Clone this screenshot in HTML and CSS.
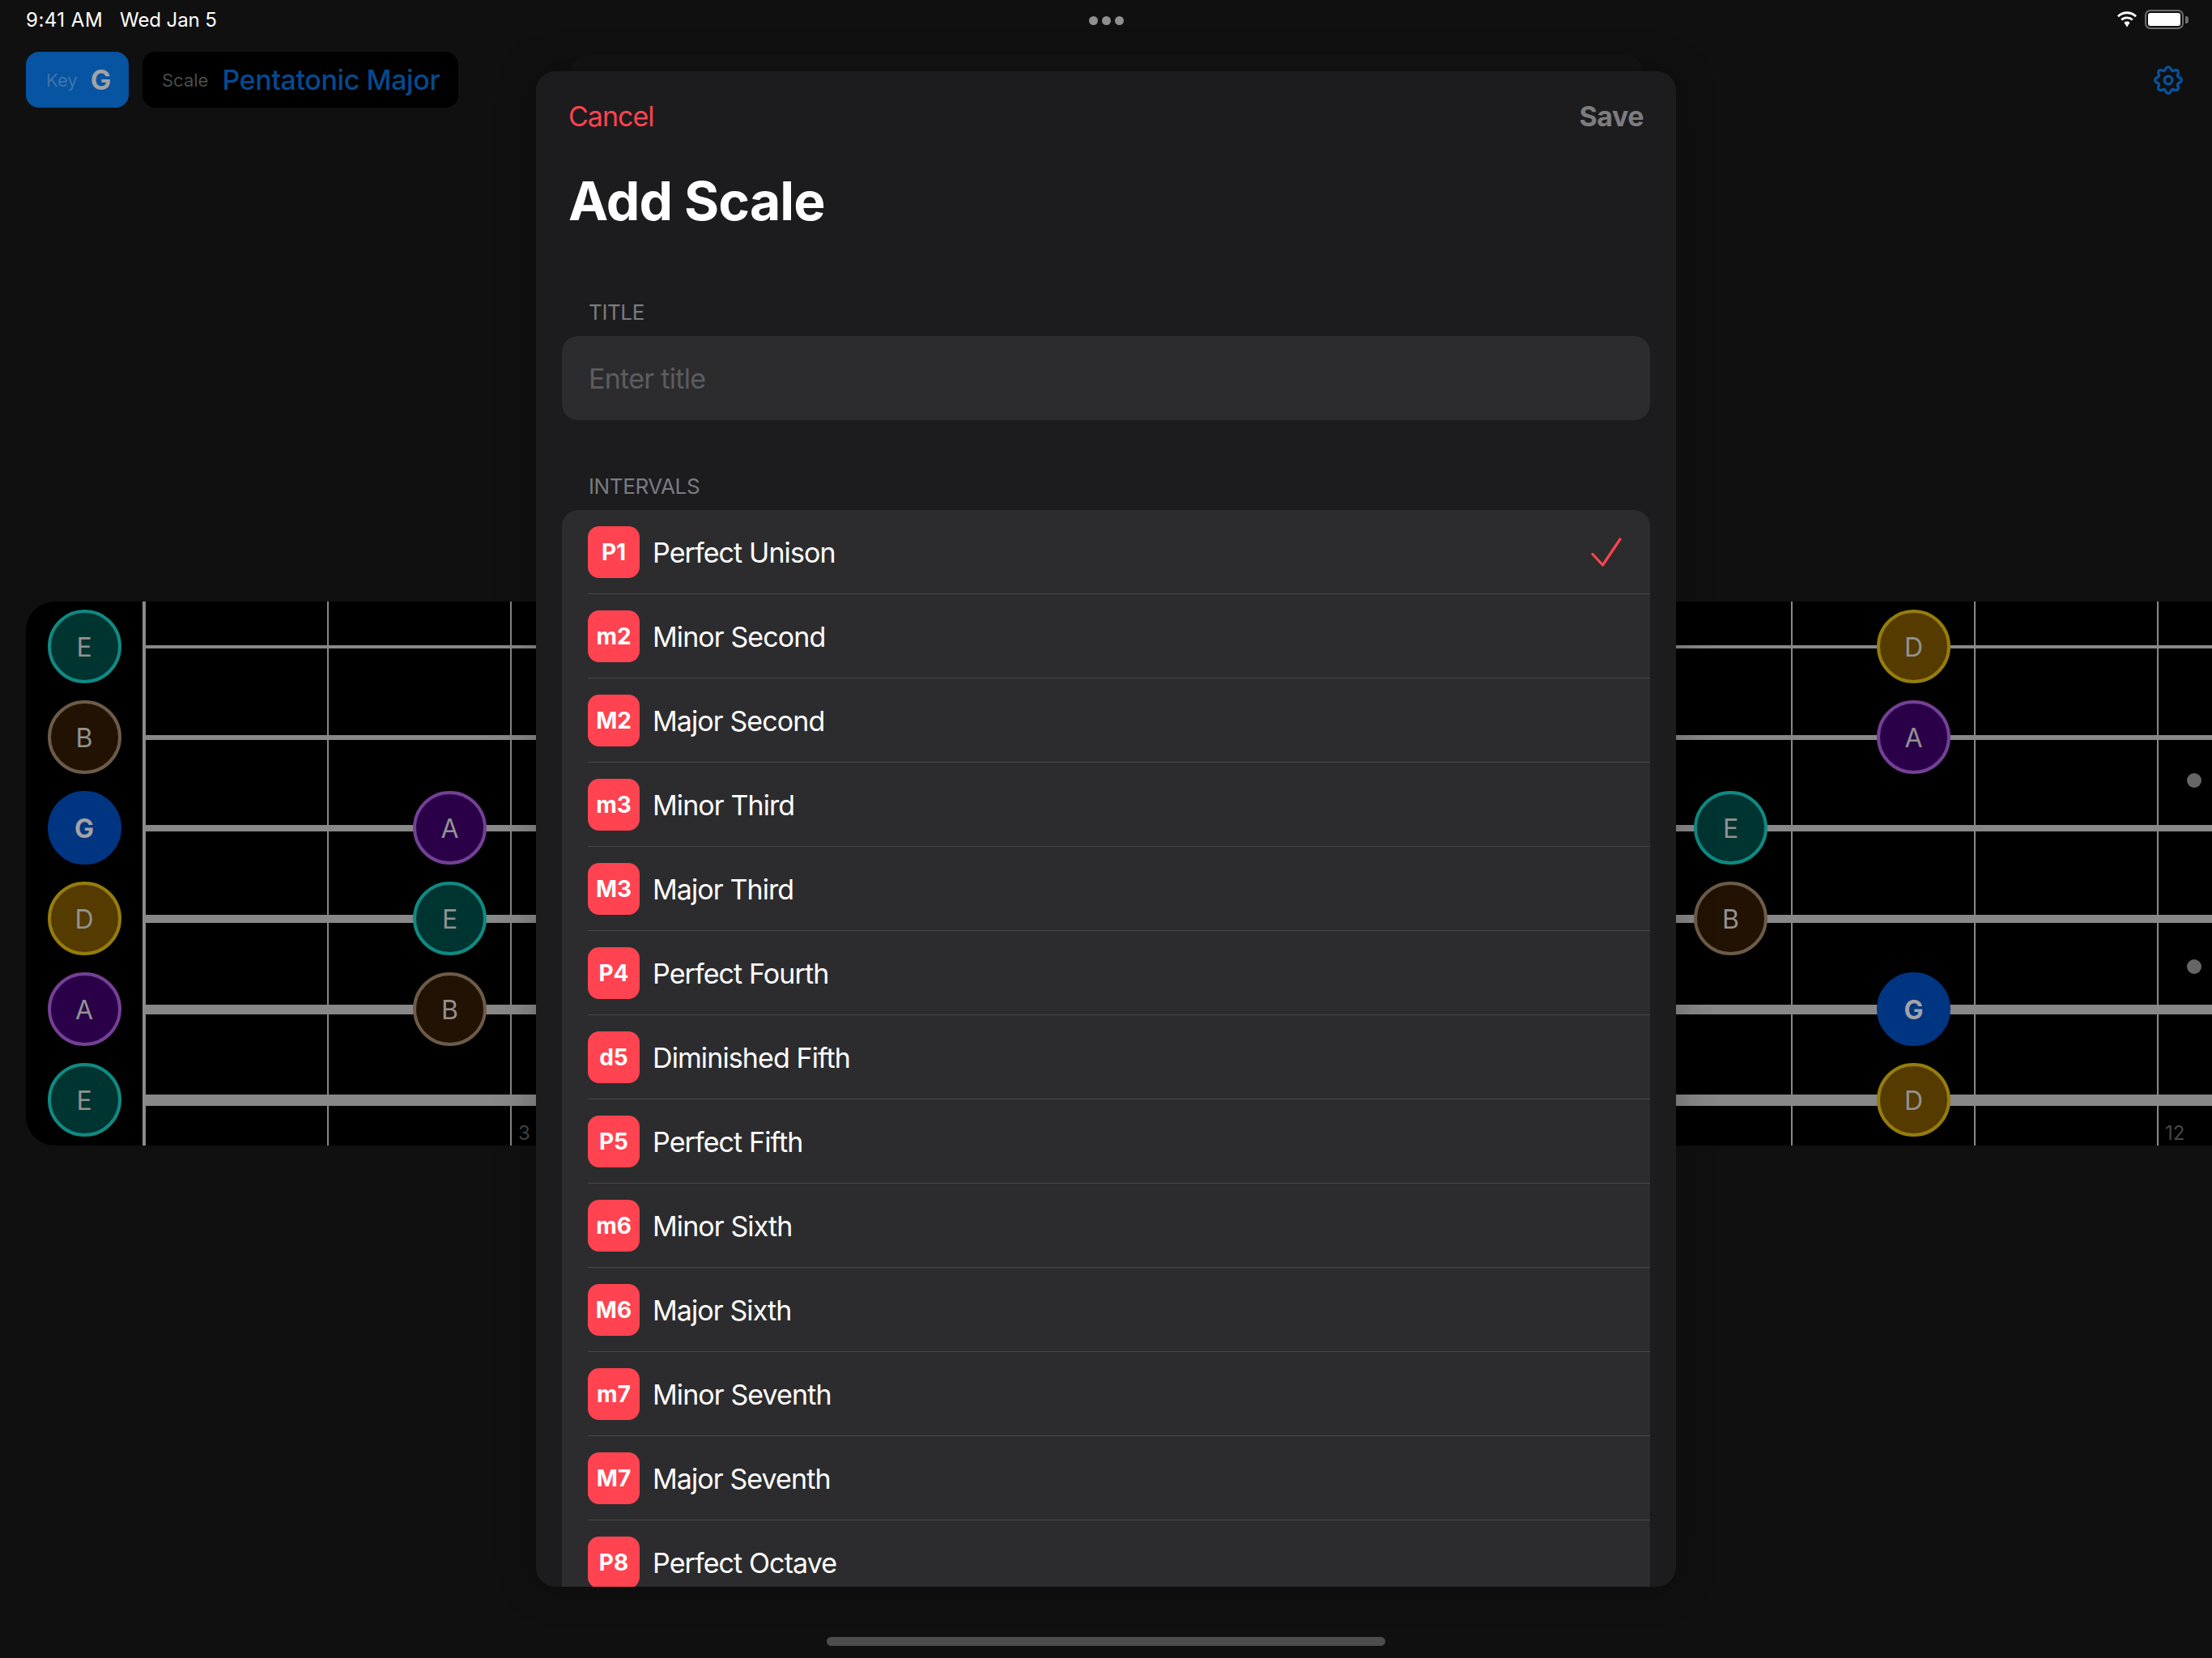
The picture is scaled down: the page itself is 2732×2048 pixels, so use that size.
FILE: index.html
```html
<!DOCTYPE html>
<html lang="en">
<head>
<meta charset="utf-8">
<title>Add Scale</title>
<link rel="stylesheet" href="styles.css">
</head>
<body>
<div class="screen">
  <header class="status">
    <div class="status-left"><span class="time">9:41 AM</span><span class="date">Wed Jan 5</span></div>
    <div class="status-right">
      <svg class="wifi" viewBox="0 0 28 22"><path d="M14 4.200c3.900 0 7.400 1.500 10.100 4l1.900-2A17.400 17.400 0 0 0 14 1.300 17.400 17.400 0 0 0 2 6.200l1.900 2c2.700-2.500 6.200-4 10.100-4z" fill="#fff"/><path d="M14 10.300c2.200 0 4.200.8 5.800 2.200l1.900-2A11.400 11.400 0 0 0 14 7.500c-3 0-5.700 1.100-7.700 3l1.900 2A8.600 8.600 0 0 1 14 10.300z" fill="#fff"/><path d="M14 13.600c-1.400 0-2.600.5-3.500 1.400l3.500 5.600 3.500-5.600c-.9-.9-2.100-1.400-3.500-1.400z" fill="#fff"/></svg>
      <div class="battery"><div class="battery-fill"></div></div>
      <div class="battery-cap"></div>
    </div>
  </header>
  <div class="toolbar">
    <div class="key-btn"><span class="key-label">Key</span><span class="key-value">G</span></div>
    <div class="scale-btn"><span class="scale-label">Scale</span><span class="scale-value">Pentatonic Major</span></div>
    <svg class="gear" viewBox="-19 -19 38 38" fill="none" stroke="#0654a2" stroke-width="3.200" stroke-linejoin="round"><path d="M14.520 -2.890Q18.500 0 14.520 2.890Q9.700 4.020 12.310 8.220Q13.080 13.080 8.220 12.310Q4.020 9.700 2.890 14.520Q0 18.500 -2.890 14.520Q-4.020 9.700 -8.220 12.310Q-13.080 13.080 -12.310 8.220Q-9.700 4.020 -14.520 2.890Q-18.500 0 -14.520 -2.890Q-9.700 -4.020 -12.310 -8.220Q-13.080 -13.080 -8.220 -12.310Q-4.020 -9.700 -2.890 -14.520Q0 -18.500 2.890 -14.520Q4.020 -9.700 8.220 -12.310Q13.080 -13.080 12.310 -8.220Q9.700 -4.020 14.520 -2.890Z"/><circle cx="0" cy="0" r="4.800"/></svg>
  </div>

  <div class="board">
    <div class="open-strings">
      <div class="note teal">E</div>
      <div class="note brown">B</div>
      <div class="note blue">G</div>
      <div class="note yellow">D</div>
      <div class="note purple">A</div>
      <div class="note teal">E</div>
    </div>
    <div class="neck">
      <div class="string s1"></div><div class="string s2"></div><div class="string s3"></div>
      <div class="string s4"></div><div class="string s5"></div><div class="string s6"></div>
      <div class="fret f1"></div><div class="fret f2"></div><div class="fret f3"></div>
      <div class="fret f4"></div><div class="fret f5"></div><div class="fret f6"></div>
      <div class="fret f7"></div><div class="fret f8"></div><div class="fret f9"></div>
      <div class="fret f10"></div><div class="fret f11"></div>

      <div class="note placed purple c-left r3">A</div>
      <div class="note placed teal c-left r4">E</div>
      <div class="note placed brown c-left r5">B</div>
      <div class="note placed yellow c-right r1">D</div>
      <div class="note placed purple c-right r2">A</div>
      <div class="note placed teal c-mid r3">E</div>
      <div class="note placed brown c-mid r4">B</div>
      <div class="note placed blue c-right r5">G</div>
      <div class="note placed yellow c-right r6">D</div>

      <div class="inlay i1"></div><div class="inlay i2"></div>
      <span class="fret-num n3">3</span><span class="fret-num n12">12</span>
    </div>
  </div>

  <div class="home-bar"></div>

  <div class="back-sheet"></div>
  <div class="more"><i></i><i></i><i></i></div>
  <section class="modal">
    <div class="nav"><span class="cancel">Cancel</span><span class="save">Save</span></div>
    <h1 class="title">Add Scale</h1>
    <div class="caption caption-title">TITLE</div>
    <div class="input">Enter title</div>
    <div class="caption caption-intervals">INTERVALS</div>
    <div class="list">
      <div class="row"><span class="badge">P1</span><span class="name">Perfect Unison</span>
        <svg class="check" viewBox="0 0 38 37" fill="none" stroke="#ff4350" stroke-width="3.200" stroke-linecap="round" stroke-linejoin="round"><path d="M2 20.500L14.500 34 36 2"/></svg></div>
      <div class="row"><span class="badge">m2</span><span class="name">Minor Second</span></div>
      <div class="row"><span class="badge">M2</span><span class="name">Major Second</span></div>
      <div class="row"><span class="badge">m3</span><span class="name">Minor Third</span></div>
      <div class="row"><span class="badge">M3</span><span class="name">Major Third</span></div>
      <div class="row"><span class="badge">P4</span><span class="name">Perfect Fourth</span></div>
      <div class="row"><span class="badge">d5</span><span class="name">Diminished Fifth</span></div>
      <div class="row"><span class="badge">P5</span><span class="name">Perfect Fifth</span></div>
      <div class="row"><span class="badge">m6</span><span class="name">Minor Sixth</span></div>
      <div class="row"><span class="badge">M6</span><span class="name">Major Sixth</span></div>
      <div class="row"><span class="badge">m7</span><span class="name">Minor Seventh</span></div>
      <div class="row"><span class="badge">M7</span><span class="name">Major Seventh</span></div>
      <div class="row"><span class="badge">P8</span><span class="name">Perfect Octave</span></div>
    </div>
  </section>
</div>
</body>
</html>
```
FILE: styles.css
```css
* { box-sizing: border-box; margin: 0; padding: 0; }
html, body { width: 2732px; height: 2048px; overflow: hidden; background: #101010; }
body { font-family: Inter, "Liberation Sans", sans-serif; color: #fff; }
.screen { position: relative; width: 2732px; height: 2048px; overflow: hidden; display: flex; flex-direction: column; }

.status { height: 48px; flex: none; display: flex; justify-content: space-between; align-items: center; padding: 0 29px 0 32px; }
.status-left { display: flex; gap: 21px; font-size: 24px; font-weight: 400; }
.time { letter-spacing: 0.500px; }
.date { letter-spacing: -0.100px; }
.status-right { display: flex; align-items: center; }
.wifi { width: 28px; height: 22px; margin-right: 8px; }
.battery { width: 48px; height: 24px; border: 2.500px solid #6e6e6e; border-radius: 7px; padding: 2px; }
.battery-fill { width: 100%; height: 100%; background: #fff; border-radius: 3px; }
.battery-cap { width: 4px; height: 9px; margin-left: 2px; background: #6e6e6e; border-radius: 0 3px 3px 0; }

.toolbar { flex: none; height: 69px; margin-top: 16px; padding: 0 35px 0 32px; display: flex; align-items: center; gap: 17px; }
.key-btn { width: 127px; height: 69px; background: #0654a2; border-radius: 16px; display: flex; align-items: center; padding-left: 25px; gap: 18px; }
.key-label { font-size: 22px; color: #3f76ac; }
.key-value { font-size: 34px; font-weight: 700; color: #a2a2a4; margin-left: -2px; }
.scale-btn { width: 390px; height: 69px; background: #000; border-radius: 16px; display: flex; align-items: center; padding-left: 24px; gap: 17px; }
.scale-label { font-size: 22px; color: #4b4b4b; }
.scale-value { font-size: 34px; font-weight: 500; color: #054a8f; white-space: nowrap; letter-spacing: -0.400px; }
.gear { width: 38px; height: 38px; margin-left: auto; }

.board { flex: none; margin: 610px 0 0 32px; height: 672px; width: 2700px; background: #000; border-radius: 36px 0 0 36px; display: flex; overflow: hidden; }
.open-strings { width: 144px; flex: none; display: flex; flex-direction: column; align-items: center; padding-top: 10px; gap: 21px; }
.note { width: 91px; height: 91px; flex: none; border-radius: 50%; border: 4.500px solid; display: flex; align-items: center; justify-content: center; font-size: 32px; color: #929292; padding-top: 1px; }
.teal { background: #003431; border-color: #0f8a82; }
.brown { background: #211204; border-color: #6c5b47; }
.blue { background: #003582; border-color: #003582; font-weight: 700; color: #a3a3a6; }
.yellow { background: #553b00; border-color: #957d0b; }
.purple { background: #2a0049; border-color: #744095; }

.neck { position: relative; flex: 1; border-left: 4px solid #8a8a8a; }
.string { position: absolute; left: 0; right: 0; background: #888; }
.s1 { top: 54px; height: 4px; }
.s2 { top: 165px; height: 6px; }
.s3 { top: 276px; height: 8px; }
.s4 { top: 387px; height: 10px; }
.s5 { top: 498px; height: 12px; }
.s6 { top: 609px; height: 14px; }
.fret { position: absolute; top: 0; bottom: 0; width: 2px; background: #888; }
.f1 { left: 224px; } .f2 { left: 450px; } .f3 { left: 676px; } .f4 { left: 902px; }
.f5 { left: 1128px; } .f6 { left: 1354px; } .f7 { left: 1580px; } .f8 { left: 1806px; }
.f9 { left: 2032px; } .f10 { left: 2258px; } .f11 { left: 2484px; }

.placed { position: absolute; }
.c-left { left: 330px; }
.c-mid { left: 1912px; }
.c-right { left: 2138px; }
.r1 { top: 10px; } .r2 { top: 122px; } .r3 { top: 234px; }
.r4 { top: 346px; } .r5 { top: 458px; } .r6 { top: 570px; }
.inlay { position: absolute; left: 2521px; width: 18px; height: 18px; border-radius: 50%; background: #666; }
.i1 { top: 212px; } .i2 { top: 442px; }
.fret-num { position: absolute; top: 644px; font-size: 24px; line-height: 26px; color: #474747; }
.n3 { left: 460px; } .n12 { left: 2494px; }

.home-bar { position: absolute; left: 1021px; top: 2022px; width: 690px; height: 11px; border-radius: 6px; background: #4d4d4d; }
.more { position: absolute; left: 1345px; top: 20px; display: flex; gap: 5px; }
.more i { display: block; width: 11px; height: 11px; border-radius: 50%; background: #8f8f8f; }
.back-sheet { position: absolute; left: 704px; top: 68px; width: 1326px; height: 60px; background: #141415; border-radius: 22px 22px 0 0; }

.modal { position: absolute; left: 662px; top: 88px; width: 1408px; height: 1872px; background: #1c1c1e; border-radius: 24px; overflow: hidden; padding: 0 32px; box-shadow: 0 0 50px rgba(0,0,0,.25); }
.nav { display: flex; justify-content: space-between; align-items: center; height: 42px; margin-top: 34px; padding: 0 9px 0 9px; font-size: 34px; }
.cancel { color: #ff4350; letter-spacing: -1px; margin-left: -1px; }
.save { color: #7d7d7f; font-weight: 700; letter-spacing: -0.500px; margin-right: -1px; }
.title { font-size: 66px; line-height: 80px; font-weight: 700; margin-top: 44px; padding-left: 8px; letter-spacing: -0.900px; }
.caption { font-size: 26px; line-height: 32px; color: #7b7b80; padding-left: 33px; letter-spacing: -0.400px; }
.caption-title { margin-top: 82px; }
.caption-intervals { margin-top: 66px; }
.input { height: 104px; margin-top: 13px; background: #2c2c2e; border-radius: 20px; display: flex; align-items: center; padding-left: 33px; font-size: 34px; color: #5c5c5f; letter-spacing: -0.700px; }
.list { margin-top: 13px; background: #2c2c2e; border-radius: 20px 20px 0 0; }
.row { position: relative; height: 104px; display: flex; align-items: center; padding-left: 32px; gap: 16px; }
.row + .row::before { content: ""; position: absolute; left: 32px; right: 0; top: -1px; height: 1px; background: #48484a; }
.badge { width: 64px; height: 64px; flex: none; border-radius: 14px; background: #ff4350; display: flex; align-items: center; justify-content: center; font-size: 28px; font-weight: 700; color: #fff; }
.name { font-size: 34px; color: #fff; letter-spacing: -0.900px; }
.check { position: absolute; left: 1271px; top: 34px; width: 38px; height: 37px; }
```
